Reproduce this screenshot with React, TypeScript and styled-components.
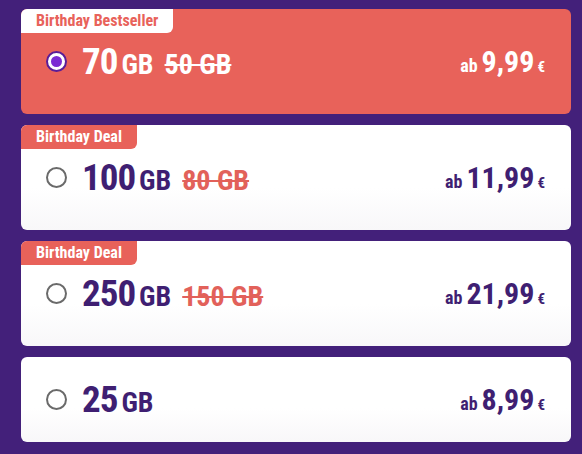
import styled, { createGlobalStyle, css } from "styled-components";

const GlobalStyle = createGlobalStyle`
  html, body {
    margin: 0;
    padding: 0;
    background: #43207a;
  }
  body {
    font-family: "Roboto Condensed", "Liberation Sans Narrow", Roboto, "Liberation Sans", sans-serif;
    font-stretch: condensed;
  }
`;

const List = styled.div`
  display: flex;
  flex-direction: column;
  gap: 11px;
  width: 550px;
  padding: 9px 0 12px 21px;
`;

const Card = styled.div<{ $active?: boolean; $badge?: boolean }>`
  position: relative;
  box-sizing: border-box;
  height: ${(p) => (p.$badge ? 105 : 85)}px;
  border-radius: 6px;
  display: flex;
  align-items: center;
  padding: 0 26px 0 25px;
  background: ${(p) =>
    p.$active ? "#e8625a" : "linear-gradient(180deg, #ffffff 60%, #f8f7f9 100%)"};
  color: ${(p) => (p.$active ? "#ffffff" : "#3f1f72")};
`;

const Badge = styled.div<{ $active?: boolean }>`
  position: absolute;
  top: 0;
  left: 0;
  height: 24px;
  line-height: 24px;
  padding: 0 15px;
  border-radius: 6px 0 6px 0;
  font-size: 16px;
  font-weight: 700;
  background: ${(p) => (p.$active ? "#ffffff" : "#e8625a")};
  color: ${(p) => (p.$active ? "#e8625a" : "#ffffff")};
`;

const Radio = styled.span<{ $checked?: boolean }>`
  box-sizing: border-box;
  width: 21px;
  height: 21px;
  border-radius: 50%;
  flex-shrink: 0;
  display: flex;
  align-items: center;
  justify-content: center;
  background: #ffffff;
  border: 2px solid ${(p) => (p.$checked ? "#5a1d98" : "#6a6a6a")};
  ${(p) =>
    p.$checked &&
    css`
      &::after {
        content: "";
        width: 11px;
        height: 11px;
        border-radius: 50%;
        background: #7b2bd3;
      }
    `}
`;

const Volume = styled.div`
  display: flex;
  align-items: baseline;
  margin-left: 15px;
  font-weight: 700;
`;

const Amount = styled.span`
  font-size: 37px;
  letter-spacing: -1px;
`;

const Unit = styled.span`
  font-size: 28px;
  margin-left: 4px;
`;

const OldVolume = styled.s<{ $active?: boolean }>`
  font-size: 28px;
  margin-left: 11px;
  color: ${(p) => (p.$active ? "#ffffff" : "#e2615a")};
  text-decoration-thickness: 2px;
`;

const Price = styled.div`
  margin-left: auto;
  display: flex;
  align-items: baseline;
  font-weight: 700;
`;

const From = styled.span`
  font-size: 18px;
  margin-right: 4px;
`;

const Value = styled.span`
  font-size: 30px;
`;

const Currency = styled.span`
  font-size: 15px;
  margin-left: 3px;
`;

type Plan = {
  gb: string;
  old?: string;
  price: string;
  badge?: string;
  active?: boolean;
};

const plans: Plan[] = [
  { gb: "70", old: "50 GB", price: "9,99", badge: "Birthday Bestseller", active: true },
  { gb: "100", old: "80 GB", price: "11,99", badge: "Birthday Deal" },
  { gb: "250", old: "150 GB", price: "21,99", badge: "Birthday Deal" },
  { gb: "25", price: "8,99" },
];

export default function App() {
  return (
    <>
      <GlobalStyle />
      <List>
        {plans.map((p) => (
          <Card key={p.gb} $active={p.active} $badge={!!p.badge}>
            {p.badge && <Badge $active={p.active}>{p.badge}</Badge>}
            <Radio $checked={p.active} />
            <Volume>
              <Amount>{p.gb}</Amount>
              <Unit>GB</Unit>
              {p.old && <OldVolume $active={p.active}>{p.old}</OldVolume>}
            </Volume>
            <Price>
              <From>ab</From>
              <Value>{p.price}</Value>
              <Currency>€</Currency>
            </Price>
          </Card>
        ))}
      </List>
    </>
  );
}
